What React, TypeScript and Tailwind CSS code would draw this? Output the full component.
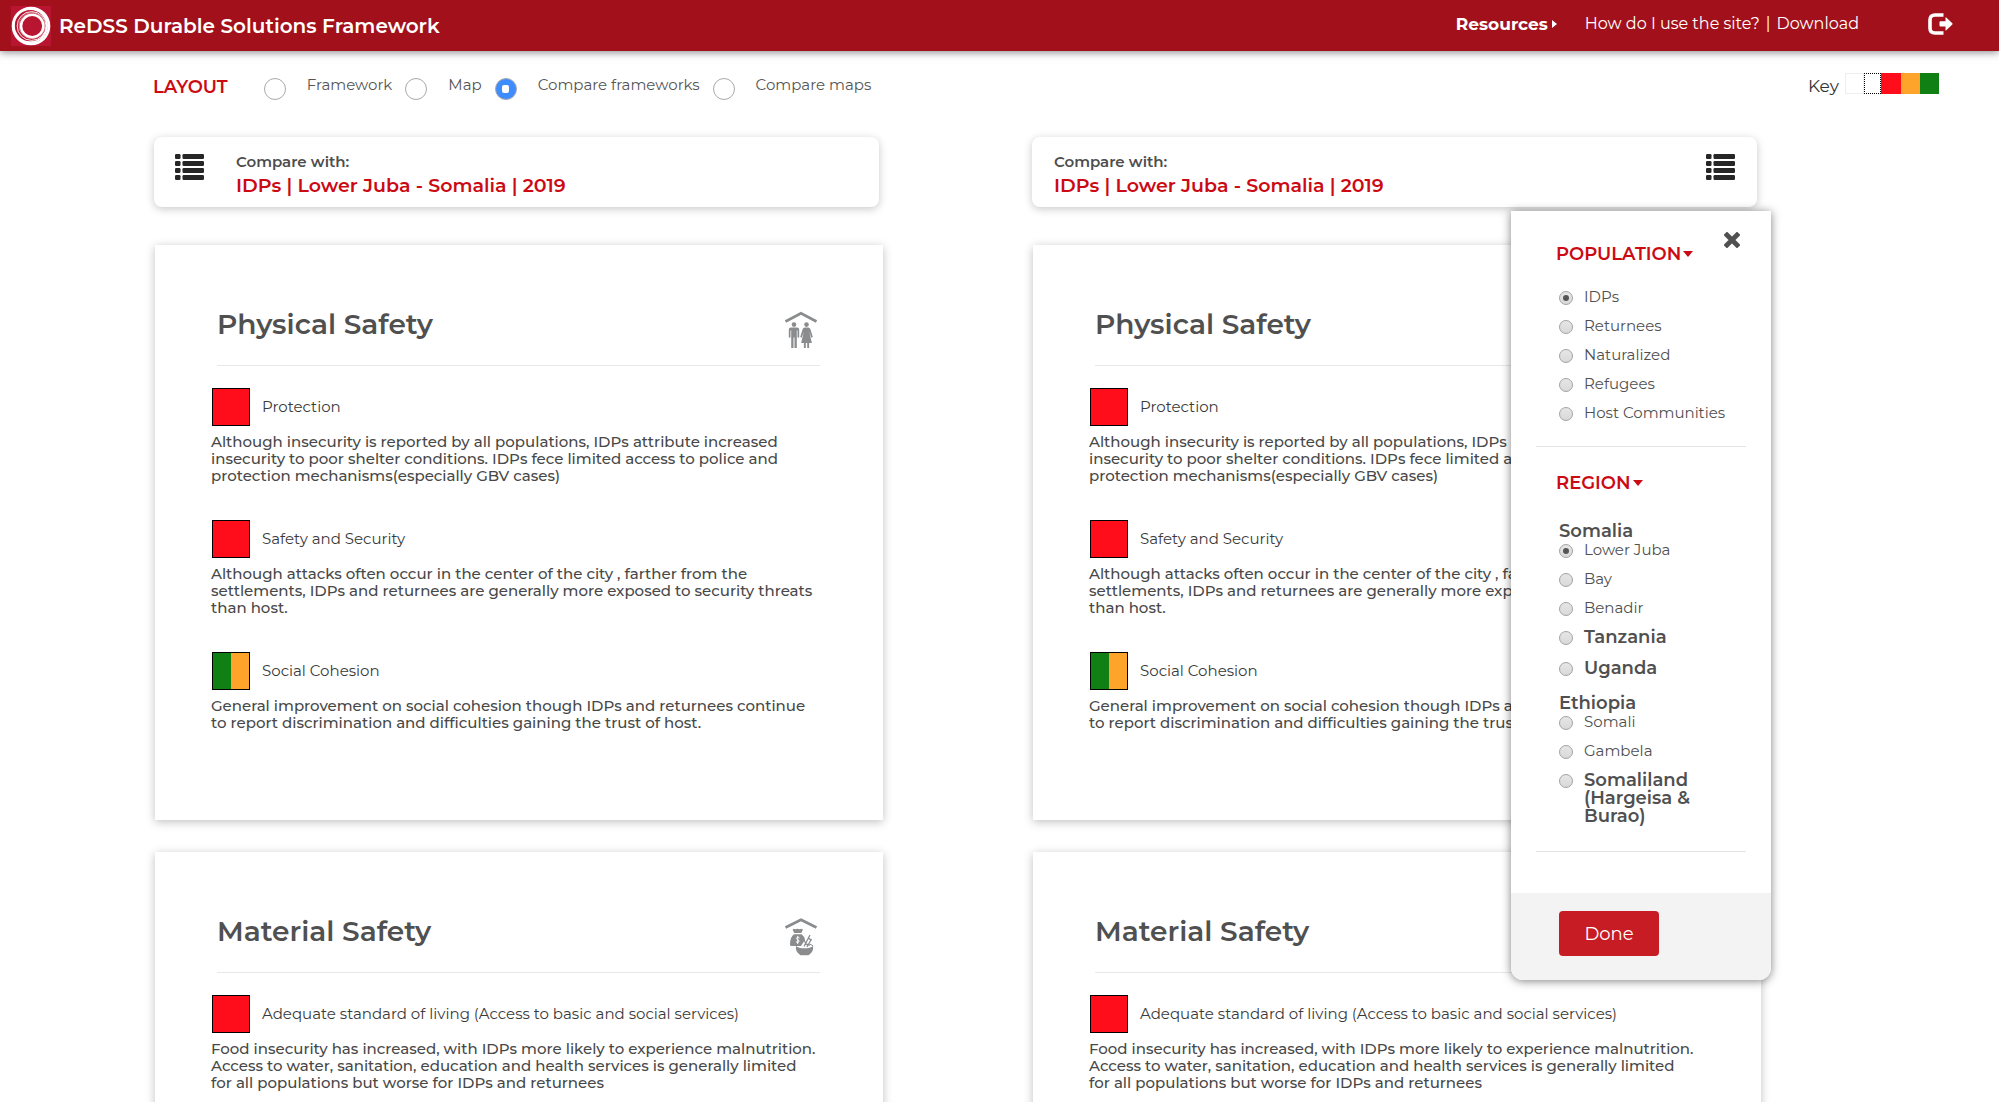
import React, { useState } from "react";

type Tone = "red" | "mixed";
type Item = { tone: Tone; label: string; text: string };
type Topic = { title: string; icon: "people" | "goods"; items: Item[] };

const topics: Topic[] = [
  {
    title: "Physical Safety",
    icon: "people",
    items: [
      {
        tone: "red",
        label: "Protection",
        text: "Although insecurity is reported by all populations, IDPs attribute increased\ninsecurity to poor shelter conditions. IDPs fece limited access to police and\nprotection mechanisms(especially GBV cases)",
      },
      {
        tone: "red",
        label: "Safety and Security",
        text: "Although attacks often occur in the center of the city , farther from the\nsettlements, IDPs and returnees are generally more exposed to security threats\nthan host.",
      },
      {
        tone: "mixed",
        label: "Social Cohesion",
        text: "General improvement on social cohesion though IDPs and returnees continue\nto report discrimination and difficulties gaining the trust of host.",
      },
    ],
  },
  {
    title: "Material Safety",
    icon: "goods",
    items: [
      {
        tone: "red",
        label: "Adequate standard of living (Access to basic and social services)",
        text: "Food insecurity has increased, with IDPs more likely to experience malnutrition.\nAccess to water, sanitation, education and health services is generally limited\nfor all populations but worse for IDPs and returnees",
      },
    ],
  },
];

function Logo() {
  return (
    <svg viewBox="0 0 40 40" className="size-10 shrink-0" aria-hidden="true">
      <rect width="40" height="40" fill="#b81530" />
      <circle cx="20" cy="20" r="18" fill="none" stroke="#fff" strokeWidth="2.6" />
      <circle cx="19.4" cy="19.6" r="16.6" fill="none" stroke="#fff" strokeWidth="2" />
      <circle cx="20.6" cy="20" r="14.4" fill="none" stroke="#fff" strokeWidth="0.9" />
      <circle cx="21.2" cy="20" r="11.2" fill="none" stroke="#fff" strokeWidth="2.6" />
      <circle cx="21" cy="19.6" r="13" fill="none" stroke="#f3c9cf" strokeWidth="0.6" />
    </svg>
  );
}

function ListIcon() {
  return (
    <svg viewBox="0 0 29 27" className="h-[27px] w-[29px]" fill="#262626" aria-hidden="true">
      {[0, 7, 14, 21].map((y) => (
        <g key={y}>
          <rect x="0" y={y} width="5.5" height="5" rx="1.2" />
          <rect x="7.5" y={y} width="21.5" height="5" rx="1.2" />
        </g>
      ))}
    </svg>
  );
}

function SignOutIcon() {
  return (
    <svg viewBox="0 0 25 22" className="h-[22px] w-[25px]" aria-hidden="true">
      <path d="M15.500 2H7Q2 2 2 7v8q0 5 5 5h8.500" fill="none" stroke="#fff" strokeWidth="3.600" />
      <path d="M12.500 8.200h5V4.800q0-1 .8-.2l6 5.600q.7.700 0 1.400l-6 5.600q-.8.800-.8-.2v-3.500h-5q-1 0-1-1V9.200q0-1 1-1z" fill="#fff" />
    </svg>
  );
}

function PeopleIcon() {
  return (
    <svg viewBox="0 0 34 38" className="h-[38px] w-[34px]" fill="#8a8c8e" aria-hidden="true">
      <path d="M1.500 10.500 17 2.300l15.500 8.200" fill="none" stroke="#8a8c8e" strokeWidth="2.800" />
      <circle cx="10" cy="13.600" r="2.300" />
      <path d="M7 16.600h6q2.200 0 2.200 2.200v7.700h-1.700v-7h-.7V37h-2.300V26.500h-1V37H7.200V19.500h-.7v7H4.800v-7.700q0-2.200 2.200-2.200z" />
      <circle cx="22.500" cy="13.600" r="2.300" />
      <path d="M20.700 16.600h3.600q1.500 0 2 1.500l2.500 8-1.500.6-2.200-6.200 2.800 11.500h-2.800V37h-1.900v-5h-1.400v5h-1.900v-5h-2.800l2.800-11.500-2.200 6.200-1.500-.6 2.500-8q.5-1.500 2-1.500z" />
    </svg>
  );
}

function GoodsIcon() {
  return (
    <svg viewBox="0 0 34 38" className="h-[38px] w-[34px]" fill="#8a8c8e" aria-hidden="true">
      <path d="M1.500 9.500 17 1.800l15.500 7.700" fill="none" stroke="#8a8c8e" strokeWidth="2.800" />
      <path d="M9.500 10.800q2 .8 4 0 2 .8 4.500 0 1.500.8.300 2.200l-1 2h-7l-1-2q-1.300-1.400.2-2.200z" />
      <path d="M10 16.300h7.600q3 2.200 3.400 5.500l-4 6.200H7.500Q6 28 6 26.500q0-7.500 4-10.200z" />
      <path d="M15.600 20q-1-1.100-2.400-.6-1.700.9.100 2.100 2.600 1 1.600 2.400-1.200 1.200-3-.1M13.700 18v8" fill="none" stroke="#fff" strokeWidth="1" />
      <path d="M20 28.500 26 17M23 29l4.500-8M19.500 21.500l2.500 4M21 26l5 1M24.500 20l3 2.500" fill="none" stroke="#8a8c8e" strokeWidth="1.300" />
      <path d="M12 28q2.500 2.300 8.500 2.300t8.500-2.300q1 6-4.500 9.200h-8Q11 34 12 28z" />
      <path d="M12 28.200q1-1.700 4.500-2.300M29 28.200q-.7-1.500-3-2" fill="none" stroke="#8a8c8e" strokeWidth="1" />
    </svg>
  );
}

function Caret() {
  return <span className="border-x-[5px] border-t-[6px] border-x-transparent border-t-[#cc0a14]" />;
}

function LayoutOption({ label, checked, onPick }: { label: string; checked: boolean; onPick: () => void }) {
  return (
    <label className="flex items-start gap-[21px]">
      <input
        type="radio"
        name="layout"
        checked={checked}
        onChange={onPick}
        className="mt-[3px] grid size-[22px] shrink-0 appearance-none place-items-center rounded-full border border-[#a9a9a9] bg-white before:h-2 before:w-[7px] before:rounded-xs before:bg-white checked:bg-[#3f8cff]"
      />
      <span className="leading-5">{label}</span>
    </label>
  );
}

function CompareHeader({ flip, onToggle }: { flip?: boolean; onToggle: () => void }) {
  return (
    <div
      className={
        "flex items-start rounded-lg bg-white pt-4 pb-[9px] shadow-[0_2px_9px_rgba(0,0,0,0.22)] " +
        (flip ? "flex-row-reverse justify-between pr-[22px] pl-[22px]" : "gap-8 pr-6 pl-[21px]")
      }
    >
      <button type="button" aria-label="Choose population and region" onClick={onToggle} className="pt-px">
        <ListIcon />
      </button>
      <div>
        <p className="text-[15px] leading-[18px] font-semibold text-[#4d4d4d]">Compare with:</p>
        <p className="pt-[3px] text-[19px] leading-6 font-semibold text-[#cc0a14]">IDPs | Lower Juba - Somalia | 2019</p>
      </div>
    </div>
  );
}

function TopicCard({ topic }: { topic: Topic }) {
  return (
    <section className="min-h-[575px] bg-white px-14 pt-[61px] shadow-[0_2px_9px_rgba(0,0,0,0.25)]">
      <header className="mr-[7px] ml-1.5 flex h-[60px] items-start justify-between border-b border-[#e8e8e8]">
        <h2 className="text-[28px] leading-9 font-semibold text-[#505050]">{topic.title}</h2>
        <span className="pt-[5px] pr-0.5">{topic.icon === "people" ? <PeopleIcon /> : <GoodsIcon />}</span>
      </header>
      <div className="flex flex-col gap-9 pt-[22px]">
        {topic.items.map((item) => (
          <article key={item.label}>
            <div className="flex items-center gap-3 pl-px text-[15px] text-[#3a3a3a]">
              <span className="flex size-[38px] border border-black">
                <span className={item.tone === "red" ? "flex-1 bg-[#ff0d1b]" : "flex-1 bg-[#107f14]"} />
                <span className={item.tone === "red" ? "flex-1 bg-[#ff0d1b]" : "flex-1 bg-[#ffa42b]"} />
              </span>
              <h3>{item.label}</h3>
            </div>
            <p className="pt-[7px] text-[15px] leading-[17px] font-medium whitespace-pre text-[#484848]">{item.text}</p>
          </article>
        ))}
      </div>
    </section>
  );
}

function Choice({ group, label, bold, checked }: { group: string; label: string; bold?: boolean; checked?: boolean }) {
  return (
    <label className="flex items-start gap-[11px]">
      <input
        type="radio"
        name={group}
        defaultChecked={checked}
        className="mt-[3px] grid size-3.5 shrink-0 appearance-none place-items-center rounded-full border border-[#a3a3a3] bg-linear-to-b from-[#e6e6e6] to-[#d9d9d9] before:size-1.5 before:rounded-full checked:before:bg-[#555]"
      />
      <span
        className={
          bold ? "min-h-5 text-lg leading-[18px] font-semibold text-[#505050]" : "text-[15px] leading-[18px] text-[#505050]"
        }
      >
        {label}
      </span>
    </label>
  );
}

function FilterPanel({ onClose }: { onClose: () => void }) {
  return (
    <div className="absolute top-[74px] right-[-10px] z-10 w-[260px] overflow-hidden rounded-b-xl bg-white shadow-[0_1px_10px_rgba(0,0,0,0.5)]">
      <button type="button" aria-label="Close" onClick={onClose} className="absolute top-[21px] right-[31px]">
        <svg viewBox="0 0 16 16" className="size-4" aria-hidden="true">
          <path d="M3 3l10 10M13 3 3 13" stroke="#505050" strokeWidth="4.800" strokeLinecap="square" />
        </svg>
      </button>
      <div className="mx-[25px] border-b border-[#e4e4e4] pt-8 pb-6">
        <h3 className="flex items-center gap-0.5 pl-5 text-lg leading-[22px] font-semibold text-[#cc0a14]">
          POPULATION <Caret />
        </h3>
        <div className="flex flex-col gap-[11px] pt-[23px] pl-[23px]">
          <Choice group="population" label="IDPs" checked />
          <Choice group="population" label="Returnees" />
          <Choice group="population" label="Naturalized" />
          <Choice group="population" label="Refugees" />
          <Choice group="population" label="Host Communities" />
        </div>
      </div>
      <div className="mx-[25px] border-b border-[#e4e4e4] pt-[25px] pb-[26px]">
        <h3 className="flex items-center gap-0.5 pl-5 text-lg leading-[22px] font-semibold text-[#cc0a14]">
          REGION <Caret />
        </h3>
        <div className="flex flex-col pt-[27px] pr-10 pl-[23px]">
          <h4 className="text-lg leading-5 font-semibold text-[#505050]">Somalia</h4>
          <div className="flex flex-col gap-[11px]">
            <Choice group="region" label="Lower Juba" checked />
            <Choice group="region" label="Bay" />
            <Choice group="region" label="Benadir" />
            <Choice group="region" label="Tanzania" bold />
            <Choice group="region" label="Uganda" bold />
          </div>
          <h4 className="pt-3.5 text-lg leading-5 font-semibold text-[#505050]">Ethiopia</h4>
          <div className="flex flex-col gap-[11px]">
            <Choice group="region" label="Somali" />
            <Choice group="region" label="Gambela" />
            <Choice group="region" label="Somaliland (Hargeisa & Burao)" bold />
          </div>
        </div>
      </div>
      <div className="mt-[41px] bg-[#f3f3f3] px-12 pt-[18px] pb-6">
        <button type="button" onClick={onClose} className="h-[45px] w-[100px] rounded bg-[#c81c24] text-lg text-white">
          Done
        </button>
      </div>
    </div>
  );
}

export default function App() {
  const [layout, setLayout] = useState("Compare frameworks");
  const [open, setOpen] = useState(true);
  return (
    <div className="h-screen overflow-hidden bg-white font-['Montserrat','Inter',sans-serif]">
      <header className="flex h-[51px] items-center justify-between bg-[#a2111b] pr-[46px] pl-[11px] text-white shadow-[0_1px_8px_rgba(0,0,0,0.5)]">
        <div className="flex items-center gap-2">
          <Logo />
          <h1 className="text-xl font-semibold">ReDSS Durable Solutions Framework</h1>
        </div>
        <nav className="flex items-center pb-[3px] text-base leading-5">
          <a href="#resources" className="mr-7 flex items-center gap-1 text-[17px] font-bold">
            Resources
            <span className="border-y-4 border-l-[5px] border-y-transparent border-l-white" />
          </a>
          <a href="#help">How do I use the site?</a>
          <span className="px-1.5">|</span>
          <a href="#download">Download</a>
          <button type="button" aria-label="Sign out" className="ml-[69px]">
            <SignOutIcon />
          </button>
        </nav>
      </header>

      <div className="flex items-start justify-between pt-6 pr-[60px] pl-[153px]">
        <fieldset className="flex h-[26px] items-start text-[15px] text-[#555]">
          <legend className="float-left mr-9 text-lg leading-6 font-semibold text-[#cc0a14]">LAYOUT</legend>
          <div className="flex gap-[13px]">
            {["Framework", "Map", "Compare frameworks", "Compare maps"].map((name) => (
              <LayoutOption key={name} label={name} checked={layout === name} onPick={() => setLayout(name)} />
            ))}
          </div>
        </fieldset>
        <div className="flex items-start gap-1.5 text-[17px] leading-[22px] text-[#333]">
          <span>Key</span>
          <span className="-mt-0.5 flex h-[21px]">
            <span className="w-[19px] border border-[#eee] bg-white" />
            <span className="w-[17px] border border-dotted border-black bg-white" />
            <span className="w-5 bg-[#ff0d1b]" />
            <span className="w-[19px] bg-[#ffa42b]" />
            <span className="w-[19px] bg-[#107f14]" />
          </span>
        </div>
      </div>

      <main className="grid grid-cols-2 gap-[150px] pt-9 pr-[238px] pl-[155px]">
        {[false, true].map((flip) => (
          <div key={String(flip)} className="relative flex flex-col">
            <div className="mr-1 mb-[38px] -ml-px">
              <CompareHeader flip={flip} onToggle={() => setOpen(!open)} />
            </div>
            <div className="flex flex-col gap-8">
              {topics.map((topic) => (
                <TopicCard key={topic.title} topic={topic} />
              ))}
            </div>
            {flip && open && <FilterPanel onClose={() => setOpen(false)} />}
          </div>
        ))}
      </main>
    </div>
  );
}
